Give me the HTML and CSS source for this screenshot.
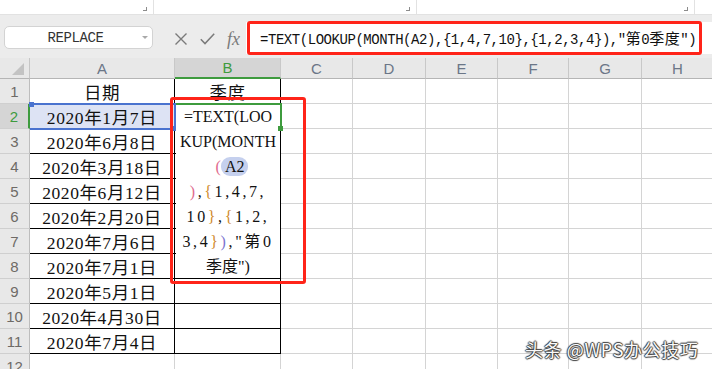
FILE: index.html
```html
<!DOCTYPE html>
<html>
<head>
<meta charset="utf-8">
<link rel="stylesheet" href="styles.css">
</head>
<body>
<div class="app">
  <div class="ribbon">
    <div class="grp g1"><span class="launch"></span></div>
    <div class="grp g2"><span class="launch"></span></div>
    <div class="grp g3"><span class="launch"></span></div>
    <div class="grp g4"></div>
  </div>

  <div class="toolbar">
    <div class="namebox"><span class="name">REPLACE</span><span class="drop"></span></div>
    <div class="icons">
      <svg class="ico-x" width="12" height="12" viewBox="0 0 12 12"><path d="M0.5 0.5L11.5 11.5M11.5 0.5L0.5 11.5" stroke="#7a7a7a" stroke-width="1.4" fill="none"/></svg>
      <svg class="ico-ok" width="15" height="12" viewBox="0 0 15 12"><path d="M0.8 6.2L5 10.6L14.2 0.8" stroke="#7a7a7a" stroke-width="1.5" fill="none"/></svg>
      <span class="fx">fx</span>
    </div>
    <div class="fbar"><span class="ftext">=TEXT(LOOKUP(MONTH(A2),{1,4,7,10},{1,2,3,4}),"<span class="cjk">第</span>0<span class="cjk">季度</span>")</span></div>
  </div>

  <div class="sheet">
    <div class="corner"><svg width="12" height="12" viewBox="0 0 12 12"><path d="M12 0L12 12L0 12Z" fill="#c3c3c3"/></svg></div>
    <div class="ch">A</div>
    <div class="ch ch-sel">B</div>
    <div class="ch">C</div>
    <div class="ch">D</div>
    <div class="ch">E</div>
    <div class="ch">F</div>
    <div class="ch">G</div>
    <div class="ch">H</div>

    <div class="rh">1</div><div class="cell a">日期</div><div class="cell b">季度</div><div class="cell"></div><div class="cell"></div><div class="cell"></div><div class="cell"></div><div class="cell"></div><div class="cell"></div>
    <div class="rh rh-sel">2</div><div class="cell a a-sel">2020年1月7日</div><div class="cell b"></div><div class="cell"></div><div class="cell"></div><div class="cell"></div><div class="cell"></div><div class="cell"></div><div class="cell"></div>
    <div class="rh">3</div><div class="cell a">2020年6月8日</div><div class="cell b"></div><div class="cell"></div><div class="cell"></div><div class="cell"></div><div class="cell"></div><div class="cell"></div><div class="cell"></div>
    <div class="rh">4</div><div class="cell a">2020年3月18日</div><div class="cell b"></div><div class="cell"></div><div class="cell"></div><div class="cell"></div><div class="cell"></div><div class="cell"></div><div class="cell"></div>
    <div class="rh">5</div><div class="cell a">2020年6月12日</div><div class="cell b"></div><div class="cell"></div><div class="cell"></div><div class="cell"></div><div class="cell"></div><div class="cell"></div><div class="cell"></div>
    <div class="rh">6</div><div class="cell a">2020年2月20日</div><div class="cell b"></div><div class="cell"></div><div class="cell"></div><div class="cell"></div><div class="cell"></div><div class="cell"></div><div class="cell"></div>
    <div class="rh">7</div><div class="cell a">2020年7月6日</div><div class="cell b"></div><div class="cell"></div><div class="cell"></div><div class="cell"></div><div class="cell"></div><div class="cell"></div><div class="cell"></div>
    <div class="rh">8</div><div class="cell a">2020年7月1日</div><div class="cell b"></div><div class="cell"></div><div class="cell"></div><div class="cell"></div><div class="cell"></div><div class="cell"></div><div class="cell"></div>
    <div class="rh">9</div><div class="cell a">2020年5月1日</div><div class="cell b"></div><div class="cell"></div><div class="cell"></div><div class="cell"></div><div class="cell"></div><div class="cell"></div><div class="cell"></div>
    <div class="rh">10</div><div class="cell a">2020年4月30日</div><div class="cell b"></div><div class="cell"></div><div class="cell"></div><div class="cell"></div><div class="cell"></div><div class="cell"></div><div class="cell"></div>
    <div class="rh">11</div><div class="cell a">2020年7月4日</div><div class="cell b"></div><div class="cell"></div><div class="cell"></div><div class="cell"></div><div class="cell"></div><div class="cell"></div><div class="cell"></div>
    <div class="rh">12</div><div class="cell"></div><div class="cell"></div><div class="cell"></div><div class="cell"></div><div class="cell"></div><div class="cell"></div><div class="cell"></div><div class="cell"></div>

    <div class="ref-box"><span class="hdl hdl-tl"></span><span class="hdl hdl-br"></span></div>
    <div class="editor">
      <div class="ln">=TEXT(LOO</div>
      <div class="ln">KUP(MONTH</div>
      <div class="ln ln-ref"><span class="p1">(</span><span class="refhl">A2</span></div>
      <div class="ln wide"><span class="p1">)</span>,<span class="p2">{</span>1,4,7,</div>
      <div class="ln wide">10<span class="p2">}</span>,<span class="p2">{</span>1,2,</div>
      <div class="ln wide">3,4<span class="p2">}</span><span class="p3">)</span>,"第0</div>
      <div class="ln">季度")</div>
    </div>
    <div class="act-box"><span class="hdl-g"></span></div>
    <div class="red red-cell"></div>
  </div>

  <div class="red red-f"></div>
  <div class="watermark">头条 @WPS办公技巧</div>
</div>
</body>
</html>
```

FILE: styles.css
```css
* { box-sizing: border-box; margin: 0; padding: 0; }
html, body { width: 712px; height: 369px; overflow: hidden; background: #fff; }
body { font-family: "Liberation Sans", "Noto Sans CJK SC", sans-serif; }

.app { position: relative; width: 712px; height: 369px; overflow: hidden; background: #fff; }

/* ribbon remnants */
.ribbon { display: flex; height: 14px; background: #fff; }
.grp { position: relative; height: 14px; border-right: 1px solid #e2e2e2; }
.g1 { width: 154px; }
.g2 { width: 263px; }
.g3 { width: 278px; }
.g4 { flex: 1; border-right: none; }
.launch { position: absolute; right: 6px; top: 7px; width: 4px; height: 4px; border-right: 1px solid #8c8c8c; border-bottom: 1px solid #8c8c8c; }

/* toolbar */
.toolbar { display: flex; align-items: flex-start; height: 44px; background: #ececec; border-top: 1px solid #e2e2e2; }
.namebox { display: flex; align-items: center; margin: 11px 0 0 4px; width: 149px; height: 23px; background: #fff; border: 1px solid #d3d3d3; border-radius: 5px; }
.name { flex: 1; text-align: center; font-family: "Liberation Mono", "DejaVu Sans Mono", monospace; font-size: 14px; letter-spacing: -0.4px; color: #333; padding-left: 4px; }
.drop { width: 0; height: 0; margin-right: 4px; border-left: 3px solid transparent; border-right: 3px solid transparent; border-top: 3px solid #a9a9a9; }
.icons { display: flex; align-items: center; margin: 17px 0 0 22px; height: 14px; }
.ico-x { margin-right: 13px; }
.ico-ok { margin-right: 12px; }
.fx { font-family: "Liberation Serif", "DejaVu Serif", serif; font-style: italic; font-size: 18px; color: #7a7a7a; line-height: 14px; }
.fbar { margin: 7px 0 0 6px; flex: 1; height: 32px; background: #fff; padding: 7px 0 0 14px; white-space: nowrap; overflow: hidden; }
.ftext { font-family: "Liberation Mono", "DejaVu Sans Mono", monospace; font-size: 14px; letter-spacing: -0.45px; color: #111; line-height: 18px; }
.ftext .cjk { font-family: "Noto Sans CJK SC", sans-serif; font-size: 15px; letter-spacing: 0.5px; }

/* sheet grid */
.sheet { position: relative; display: grid; grid-template-columns: 30px 145px 106px 72px 73px 72px 71px 73px 72px; grid-template-rows: 21px repeat(12, 25px); }
.corner { background: #e8e8e8; border-right: 1px solid #c6c6c6; border-bottom: 1px solid #b5b5b5; display: flex; align-items: flex-end; justify-content: flex-end; padding: 0 5px 3px 0; }
.ch { background: #e8e8e8; border-right: 1px solid #c8c8c8; border-bottom: 1px solid #b5b5b5; display: flex; align-items: center; justify-content: center; font-size: 15px; color: #6b7687; }
.ch-sel { background: #d5d5d5; color: #3e9b3e; border-bottom: 2px solid #3e9b3e; }
.rh { background: #e8e8e8; border-right: 1px solid #bdbdbd; border-bottom: 1px solid #cfcfcf; display: flex; align-items: center; justify-content: center; font-size: 15px; color: #6e6a66; }
.rh-sel { background: #d5d5d5; color: #3e9b3e; border-right: 2px solid #3e9b3e; }
.cell { border-right: 1px solid #d4d4d4; border-bottom: 1px solid #d4d4d4; display: flex; align-items: center; justify-content: center; font-family: "Liberation Serif", "Noto Sans CJK SC", serif; font-size: 17.5px; letter-spacing: 0.6px; color: #111; white-space: nowrap; }
.cell.a, .cell.b { border-right-color: #000; border-bottom-color: #000; }
.a-sel { background: #dde3f4; }

/* A2 reference box */
.ref-box { position: absolute; left: 30px; top: 45px; width: 146px; height: 27px; border-top: 2px solid #4a73cf; border-bottom: 2px solid #4a73cf; border-right: 2px solid #4a73cf; }
.hdl { position: absolute; width: 5px; height: 5px; background: #4a73cf; }
.hdl-tl { left: -1px; top: -3px; }
.hdl-br { right: -3px; bottom: -3px; }

/* B2 in-cell editor */
.editor { position: absolute; left: 176px; top: 46px; width: 104px; height: 174px; background: #fff; font-family: "Liberation Serif", "Noto Sans CJK SC", serif; font-size: 16px; color: #111; text-align: center; }
.ln { height: 25px; line-height: 25px; white-space: nowrap; }
.ln.wide { letter-spacing: 2.6px; }
.ln-ref { padding-left: 8px; }
.p1 { color: #e06a8e; }
.p2 { color: #d08a2c; }
.p3 { color: #7b74d0; }
.refhl { background: #c5d0ee; border-radius: 9px; padding: 1px 4px; }
.act-box { position: absolute; left: 176px; top: 45px; width: 106px; height: 27px; border-top: 2px solid #3e9b3e; border-right: 2px solid #3e9b3e; }
.hdl-g { position: absolute; right: -3px; bottom: -1px; width: 5px; height: 5px; background: #3e9b3e; }

/* red annotations */
.red { position: absolute; border: 3px solid #ff2419; border-radius: 3px; }
.red-cell { left: 170px; top: 39px; width: 136px; height: 187px; }
.red-f { left: 247px; top: 21px; width: 455px; height: 34px; }

.watermark { position: absolute; left: 525px; top: 337px; font-family: "Noto Sans CJK SC", sans-serif; font-size: 18px; letter-spacing: 0.6px; line-height: 24px; color: #fafafa; text-shadow: 1px 0 1px #3a3a3a, -1px 0 1px #3a3a3a, 0 1px 1px #3a3a3a, 0 -1px 1px #3a3a3a; white-space: nowrap; }
```
